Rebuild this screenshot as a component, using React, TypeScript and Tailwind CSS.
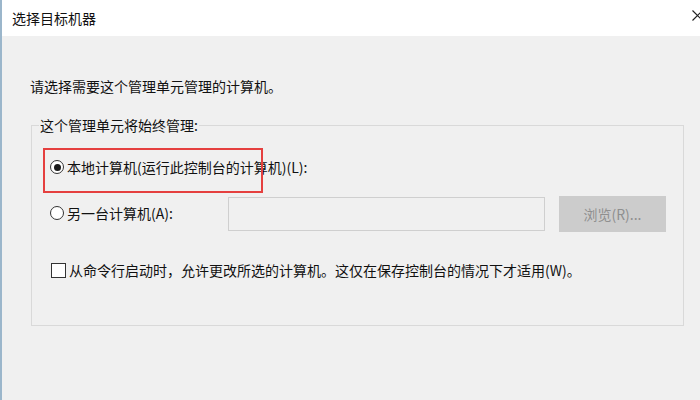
import React from 'react';

const font = { fontFamily: '"Noto Sans CJK SC", "Noto Sans", sans-serif' };

function Radio({ checked }: { checked?: boolean }) {
  return (
    <span className="w-[14px] h-[14px] rounded-full border-[1.5px] border-[#333] bg-white flex items-center justify-center shrink-0">
      {checked && <span className="w-[7px] h-[7px] rounded-full bg-[#1a1a1a]" />}
    </span>
  );
}

export default function App() {
  return (
    <div
      className="relative w-[700px] h-[400px] flex overflow-hidden bg-[#f0f0f0] text-[14px] leading-[20px] text-[#111]"
      style={font}
    >
      {/* window edge */}
      <div className="w-[2px] bg-[#9bb6cb] shrink-0" />

      <div className="flex-1 flex flex-col">
        {/* title bar */}
        <div className="h-[36px] bg-white flex items-center justify-between pl-[10px] shrink-0">
          <span className="text-[14px]">选择目标机器</span>
          <svg width="11" height="11" viewBox="0 0 11 11" className="-mr-[3px] mb-[6px]">
            <path d="M0.5 0.5 L10.5 10.5 M10.5 0.5 L0.5 10.5" stroke="#222" strokeWidth="1.2" />
          </svg>
        </div>

        {/* body */}
        <div className="flex-1 pl-[28px] pr-[14px] pt-[40px]">
          <p>请选择需要这个管理单元管理的计算机。</p>

          <fieldset className="mt-[19px] ml-[1px] w-[653px] h-[211px] border border-[#d9d9d9]">
            <legend className="ml-[7px] px-[1px] leading-[20px]">这个管理单元将始终管理:</legend>

            <div className="pl-[18px] pt-[22px] flex flex-col">
              <label className="flex items-center gap-[3px] h-[20px]">
                <Radio checked />
                <span>本地计算机(运行此控制台的计算机)(L):</span>
              </label>

              <div className="flex items-center h-[36px] mt-[19px]">
                <label className="flex items-center gap-[3px] w-[178px] -mt-[3px]">
                  <Radio />
                  <span>另一台计算机(A):</span>
                </label>
                <div className="w-[317px] h-[34px] border border-[#cfcfcf] bg-[#f0f0f0]" />
                <button className="ml-[14px] w-[107px] h-[36px] bg-[#cccccc] text-[#8f8f8f] text-[14px]">
                  浏览(R)...
                </button>
              </div>

              <label className="flex items-center gap-[3px] h-[20px] mt-[28px]">
                <span className="w-[15px] h-[15px] border-[1.5px] border-[#333] bg-white shrink-0 ml-[1px]" />
                <span>从命令行启动时，允许更改所选的计算机。这仅在保存控制台的情况下才适用(W)。</span>
              </label>
            </div>
          </fieldset>
        </div>
      </div>

      {/* annotation */}
      <div className="absolute left-[43px] top-[148px] w-[220px] h-[45px] border-2 border-[#e5403f] pointer-events-none" />
    </div>
  );
}
